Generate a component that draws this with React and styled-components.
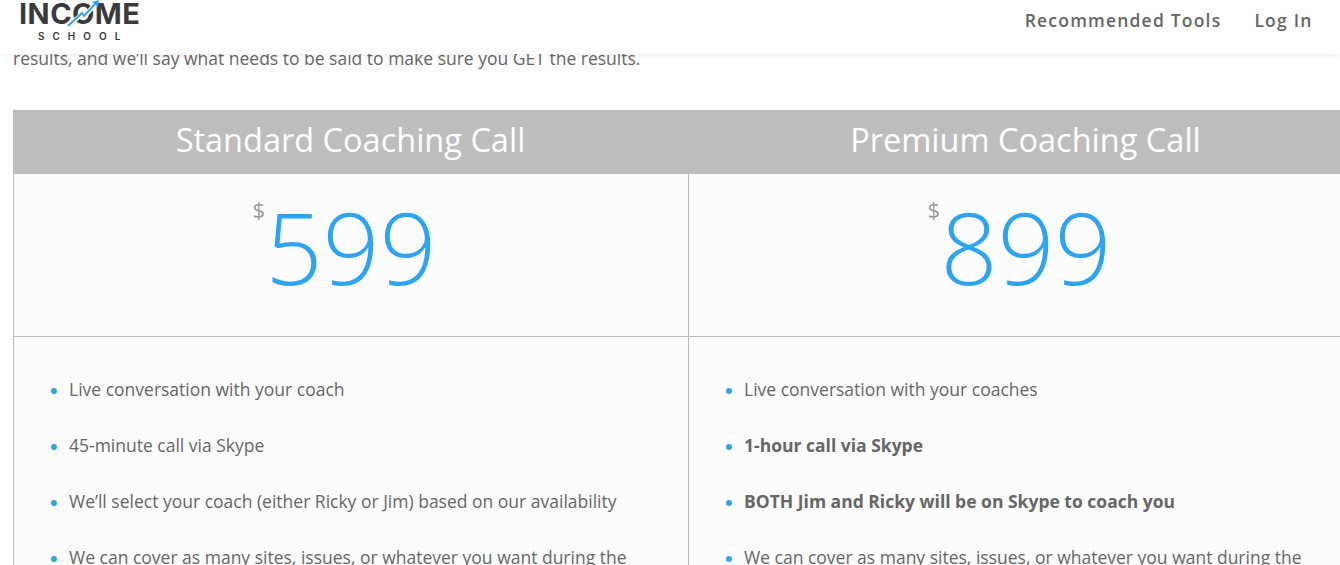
import React from "react";
import styled, { createGlobalStyle } from "styled-components";

const GlobalStyle = createGlobalStyle`
  html, body {
    margin: 0;
    padding: 0;
    height: 565px;
    overflow: hidden;
    background: #fff;
    font-family: "Open Sans", sans-serif;
  }
`;

const Page = styled.div`
  position: relative;
  width: 1340px;
  height: 565px;
  overflow: hidden;
`;

const Header = styled.header`
  position: absolute;
  top: 0;
  left: 0;
  right: 0;
  height: 54px;
  z-index: 2;
  display: flex;
  justify-content: space-between;
  background: #fff;
  box-shadow: 0 1px 6px rgba(0, 0, 0, 0.08);
`;

const Brand = styled.div`
  position: relative;
  width: 122px;
  margin-left: 19px;
  height: 54px;
  color: #3a3a3c;
`;

const BrandName = styled.div`
  font-family: "Inter", sans-serif;
  font-size: 29px;
  font-weight: 700;
  line-height: 28px;
  letter-spacing: 0.45px;
  white-space: nowrap;
`;

const BrandSub = styled.div`
  font-family: "Inter", sans-serif;
  font-size: 10px;
  font-weight: 600;
  line-height: 12px;
  letter-spacing: 8px;
  margin-top: 2px;
  padding-left: 19px;
  white-space: nowrap;
`;

const Arrow = styled.svg`
  position: absolute;
  left: 48px;
  top: 0;
`;

const Nav = styled.nav`
  display: flex;
  gap: 33px;
  margin-right: 27.5px;
  padding-top: 8px;
`;

const NavLink = styled.a`
  color: #666;
  font-size: 17.5px;
  font-weight: 600;
  letter-spacing: 1.2px;
  line-height: 24px;
`;

const Content = styled.main`
  padding: 46px 0 0 13px;
`;

const Intro = styled.p`
  margin: 0 0 40px;
  color: #666;
  font-size: 17.5px;
  line-height: 24px;
  white-space: nowrap;
`;

const Table = styled.div`
  display: grid;
  grid-template-columns: 675px 675px;
  width: 1350px;
`;

const PlanHead = styled.div`
  height: 64px;
  background: #bdbdbd;
  color: #fff;
  font-size: 32.5px;
  line-height: 60px;
  text-align: center;
`;

const PriceCell = styled.div`
  box-sizing: border-box;
  height: 163px;
  display: flex;
  justify-content: center;
  background: #fcfcfc;
  border-left: 1px solid #bbb;
  border-bottom: 1px solid #bbb;
`;

const Price = styled.div`
  position: relative;
  color: #2ea3f2;
  font-size: 100px;
  font-weight: 300;
  line-height: 145px;
`;

const Currency = styled.span`
  position: absolute;
  left: -13px;
  top: 21px;
  color: #999;
  font-size: 22px;
  font-weight: 400;
  line-height: 28px;
`;

const FeatureCell = styled.div`
  box-sizing: border-box;
  height: 240px;
  background: #fcfcfc;
  border-left: 1px solid #bbb;
`;

const Features = styled.ul`
  list-style: none;
  margin: 0;
  padding: 40px 0 0 37px;
`;

const Feature = styled.li`
  position: relative;
  margin: 0 0 32px;
  padding-left: 18px;
  color: #666;
  font-size: 17.5px;
  font-weight: ${(p) => (p.$bold ? 700 : 400)};
  line-height: 24px;
  white-space: nowrap;

  &::before {
    content: "";
    position: absolute;
    left: 0;
    top: 11px;
    width: 6px;
    height: 6px;
    border-radius: 50%;
    background: #2ea3f2;
  }
`;

const plans = [
  {
    name: "Standard Coaching Call",
    price: "599",
    features: [
      { text: "Live conversation with your coach" },
      { text: "45-minute call via Skype" },
      { text: "We’ll select your coach (either Ricky or Jim) based on our availability" },
      { text: "We can cover as many sites, issues, or whatever you want during the" },
    ],
  },
  {
    name: "Premium Coaching Call",
    price: "899",
    features: [
      { text: "Live conversation with your coaches" },
      { text: "1-hour call via Skype", bold: true },
      { text: "BOTH Jim and Ricky will be on Skype to coach you", bold: true },
      { text: "We can cover as many sites, issues, or whatever you want during the" },
    ],
  },
];

export default function App() {
  return (
    <Page>
      <GlobalStyle />
      <Header>
        <Brand>
          <BrandName>INCOME</BrandName>
          <BrandSub>SCHOOL</BrandSub>
          <Arrow width="36" height="28" viewBox="0 0 36 28">
            <path d="M1 26 L15 14 L17 17 L29 3" fill="none" stroke="#fff" strokeWidth="4.5" />
            <path d="M1 26 L15 13 L17 16 L29 3" fill="none" stroke="#2ea3f2" strokeWidth="2" />
            <path d="M25 2 L32 0 L31 7 Z" fill="#2ea3f2" />
          </Arrow>
        </Brand>
        <Nav>
          <NavLink>Recommended Tools</NavLink>
          <NavLink>Log In</NavLink>
        </Nav>
      </Header>
      <Content>
        <Intro>results, and we’ll say what needs to be said to make sure you GET the results.</Intro>
        <Table>
          {plans.map((plan) => (
            <PlanHead key={plan.name}>{plan.name}</PlanHead>
          ))}
          {plans.map((plan) => (
            <PriceCell key={plan.name}>
              <Price>
                <Currency>$</Currency>
                {plan.price}
              </Price>
            </PriceCell>
          ))}
          {plans.map((plan) => (
            <FeatureCell key={plan.name}>
              <Features>
                {plan.features.map((f) => (
                  <Feature key={f.text} $bold={f.bold}>
                    {f.text}
                  </Feature>
                ))}
              </Features>
            </FeatureCell>
          ))}
        </Table>
      </Content>
    </Page>
  );
}
